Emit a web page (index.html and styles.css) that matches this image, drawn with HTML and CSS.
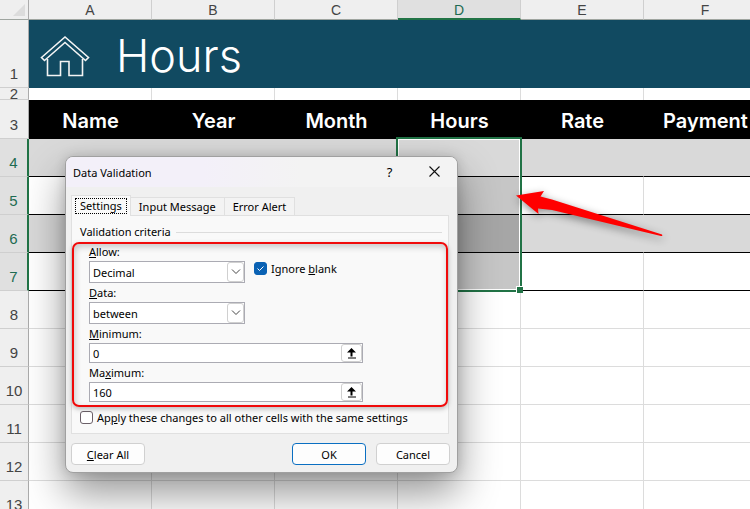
FILE: index.html
```html
<!DOCTYPE html>
<html lang="en">
<head>
    <meta charset="UTF-8">
    <meta name="viewport" content="width=device-width, initial-scale=1.0">
    <title>Hours</title>
    <link rel="stylesheet" href="styles.css">
</head>
<body>
    <div class="workbook">
        <table class="sheet">
            <colgroup>
                <col class="col-head">
                <col class="col"><col class="col"><col class="col"><col class="col"><col class="col"><col class="col">
            </colgroup>
            <thead>
                <tr class="letters">
                    <th class="corner"><svg width="12" height="12" viewBox="0 0 12 12"><path d="M12 0v12H0z" fill="#dcdcdc"/></svg></th>
                    <th>A</th><th>B</th><th>C</th><th class="selected">D</th><th>E</th><th>F</th>
                </tr>
            </thead>
            <tbody>
                <tr class="row-banner">
                    <th>1</th>
                    <td colspan="6">
                        <div class="banner">
                            <svg class="home" width="50" height="42" viewBox="0 0 50 42" fill="none" stroke="#f4f4f4" stroke-width="1.6">
                                <path d="M1.500 22.500 25 2 48.500 22.500 45.500 25.500 25 7.500 4.500 25.500z"/>
                                <path d="M7.500 24V40.500H20.500V26.500H29V40.500H42.500V24"/>
                            </svg>
                            <h1>Hours</h1>
                        </div>
                    </td>
                </tr>
                <tr class="row-thin"><th><span>2</span></th><td></td><td></td><td></td><td></td><td></td><td></td></tr>
                <tr class="row-titles"><th>3</th><td>Name</td><td>Year</td><td>Month</td><td>Hours</td><td>Rate</td><td>Payment</td></tr>
                <tr class="data shaded">
                    <th>4</th><td></td><td></td><td></td>
                    <td class="picked"><div class="selection"><span class="handle"></span></div></td>
                    <td></td><td></td>
                </tr>
                <tr class="data"><th>5</th><td></td><td></td><td></td><td class="picked"></td><td></td><td></td></tr>
                <tr class="data shaded"><th>6</th><td></td><td></td><td></td><td class="picked dark"></td><td></td><td></td></tr>
                <tr class="data"><th>7</th><td></td><td></td><td></td><td class="picked"></td><td></td><td></td></tr>
                <tr><th>8</th><td></td><td></td><td></td><td></td><td></td><td></td></tr>
                <tr><th>9</th><td></td><td></td><td></td><td></td><td></td><td></td></tr>
                <tr><th>10</th><td></td><td></td><td></td><td></td><td></td><td></td></tr>
                <tr><th>11</th><td></td><td></td><td></td><td></td><td></td><td></td></tr>
                <tr><th>12</th><td></td><td></td><td></td><td></td><td></td><td></td></tr>
                <tr><th>13</th><td></td><td></td><td></td><td></td><td></td><td></td></tr>
            </tbody>
        </table>

        <form class="dialog" role="dialog" aria-labelledby="dialogTitle">
            <div class="title-bar">
                <h2 id="dialogTitle">Data Validation</h2>
                <button type="button" class="title-btn" aria-label="Help">?</button>
                <button type="button" class="title-btn" aria-label="Close">
                    <svg width="11" height="11" viewBox="0 0 11 11" fill="none" stroke="#111" stroke-width="1.1"><path d="M.5.5l10 10M10.500.5l-10 10"/></svg>
                </button>
            </div>

            <div class="dialog-body">
                <div class="tabs" role="tablist">
                    <button type="button" class="tab active" role="tab"><span>Settings</span></button>
                    <button type="button" class="tab" role="tab">Input Message</button>
                    <button type="button" class="tab" role="tab">Error Alert</button>
                </div>

                <div class="panel">
                    <div class="group-title">Validation criteria</div>

                    <div class="criteria">
                        <label for="allow"><u>A</u>llow:</label>
                        <div class="field-row">
                            <div class="dropdown">
                                <select id="allow"><option>Decimal</option></select>
                                <span class="drop-btn"><svg width="10" height="6" viewBox="0 0 10 6" fill="none" stroke="#444"><path d="M1 .5l4 4 4-4"/></svg></span>
                            </div>
                            <label class="check">
                                <input type="checkbox" checked>
                                <svg class="tick" width="13" height="13" viewBox="0 0 13 13" fill="none" stroke="#fff"><path d="M3.500 6.500l2 2 4-4"/></svg>
                                <span>Ignore <u>b</u>lank</span>
                            </label>
                        </div>

                        <label for="data"><u>D</u>ata:</label>
                        <div class="dropdown">
                            <select id="data"><option>between</option></select>
                            <span class="drop-btn"><svg width="10" height="6" viewBox="0 0 10 6" fill="none" stroke="#444"><path d="M1 .5l4 4 4-4"/></svg></span>
                        </div>

                        <label for="minimum"><u>M</u>inimum:</label>
                        <div class="ref-box">
                            <input type="text" id="minimum" value="0">
                            <button type="button" aria-label="Select minimum cell"><svg width="9" height="11" viewBox="0 0 9 11"><path d="M4.500 0L9 4.500H5.500V8.500H3.500V4.500H0zM1 9.500h8v1H1z"/></svg></button>
                        </div>

                        <label for="maximum">Ma<u>x</u>imum:</label>
                        <div class="ref-box">
                            <input type="text" id="maximum" value="160">
                            <button type="button" aria-label="Select maximum cell"><svg width="9" height="11" viewBox="0 0 9 11"><path d="M4.500 0L9 4.500H5.500V8.500H3.500V4.500H0zM1 9.500h8v1H1z"/></svg></button>
                        </div>
                    </div>

                    <label class="check apply">
                        <input type="checkbox">
                        <span>Ap<u>p</u>ly these changes to all other cells with the same settings</span>
                    </label>
                    <div class="highlight"></div>
                </div>

                <div class="actions">
                    <button type="button" class="btn clear"><u>C</u>lear All</button>
                    <button type="button" class="btn primary">OK</button>
                    <button type="button" class="btn">Cancel</button>
                </div>
            </div>
        </form>

        <svg class="arrow" width="147" height="46" viewBox="0 0 147 46"><path d="M0 4.500L28 0 24.500 5.500Q30 7 36 8.500L146 43.500Q147 45 145 45L36 19 22 17.500 22.500 23z" fill="#f00"/></svg>
    </div>
</body>
</html>
```
FILE: styles.css
```css
* {
    margin: 0;
    padding: 0;
    box-sizing: border-box;
}

body {
    font-family: "Noto Sans", "Open Sans", sans-serif;
    font-size: 11px;
    color: #000;
    background: #fff;
}

button, input, select {
    font: inherit;
    color: inherit;
}

.workbook {
    position: relative;
    height: 100vh;
    overflow: hidden;
}

/* Sheet */
.sheet {
    table-layout: fixed;
    width: 767px;
    border-collapse: separate;
    border-spacing: 0;
    font-family: Inter, sans-serif;
}

.col-head {
    width: 29px;
}

.col {
    width: 123px;
}

.sheet td {
    height: 38px;
    border-right: 1px solid #dcdcdc;
    border-bottom: 1px solid #dcdcdc;
}

.sheet th {
    font-family: "Liberation Sans", sans-serif;
    font-size: 15px;
    font-weight: normal;
    line-height: 16px;
    color: #444;
    background: #efefef;
    vertical-align: bottom;
    padding-bottom: 5px;
    border-right: 1px solid #ababab;
    border-bottom: 1px solid #cfcfcf;
}

.sheet .letters th {
    height: 20px;
    font-size: 14px;
    padding-bottom: 1px;
    border-right-color: #cfcfcf;
    border-bottom-color: #9fa5a0;
}

.sheet .letters .corner {
    padding: 0 3px 3px 0;
    line-height: 0;
    text-align: right;
    border-right-color: #ababab;
}

.sheet .letters .selected {
    padding-bottom: 0;
    color: #1e6b52;
    background: #e0e0e0;
    border-bottom: 2px solid #217346;
}

.sheet .row-banner td {
    height: 68px;
    background: #114a61;
    border: none;
}

.banner {
    display: flex;
    align-items: center;
    gap: 26px;
    padding: 3px 0 0 11px;
    color: #fff;
}

.banner h1 {
    font-size: 45px;
    font-weight: 300;
    line-height: 60px;
}

.sheet .row-thin td,
.sheet .row-thin th {
    height: 12px;
    border-bottom: none;
    padding: 0;
}

.sheet .row-thin th {
    border-bottom: 1px solid #cfcfcf;
}

.row-thin span {
    display: flex;
    height: 10px;
    overflow: hidden;
    align-items: flex-end;
    justify-content: center;
    line-height: 10px;
}

.sheet .row-titles td {
    height: 39px;
    padding-top: 2px;
    font-size: 20px;
    font-weight: 600;
    text-align: center;
    color: #fff;
    background: #000;
    border: none;
}

.sheet .data th {
    color: #1e6b52;
    background: #e0e0e0;
    border-right: 2px solid #217346;
}

.sheet .data td {
    border-bottom-color: #000;
}

.sheet .shaded td {
    background: #d9d9d9;
    border-right-color: #d9d9d9;
}

.sheet .data .picked {
    position: relative;
    background: #c6c6c6;
}

.sheet .shaded .picked {
    background: #d9d9d9;
}

.sheet .shaded .dark {
    background: #a6a6a6;
}

.selection {
    position: absolute;
    z-index: 1;
    top: -2px;
    left: -2px;
    width: 126px;
    height: 155px;
    border: 2px solid #217346;
    box-shadow: inset 0 0 0 1px #fff;
}

.handle {
    position: absolute;
    right: -3px;
    bottom: -3px;
    width: 7px;
    height: 7px;
    background: #217346;
    border: 1px solid #fff;
    border-width: 1px 0 0 1px;
}

.arrow {
    position: absolute;
    z-index: 3;
    top: 191px;
    left: 516px;
    overflow: visible;
    filter: drop-shadow(1px 3px 4px rgba(0, 0, 0, 0.45));
}

/* Dialog */
.dialog {
    position: absolute;
    z-index: 2;
    top: 156px;
    left: 65px;
    width: 393px;
    background: #f0f0f0;
    border: 1px solid #a0a0a0;
    border-radius: 8px;
    box-shadow: 0 20px 40px rgba(0, 0, 0, 0.42), 0 0 12px rgba(0, 0, 0, 0.15);
}

.title-bar {
    display: flex;
    align-items: center;
    height: 30px;
    padding-left: 7px;
    background: linear-gradient(90deg, #f3f0f9 35%, #f3f3f3 60%);
    border-radius: 7px 7px 0 0;
}

.title-bar h2 {
    flex: 1;
    font-size: 11px;
    font-weight: normal;
}

.title-btn {
    width: 45px;
    height: 28px;
    font-size: 13px;
    background: none;
    border: none;
}

.dialog-body {
    padding: 8px 8px 7px 5px;
}

.tabs {
    display: flex;
    align-items: flex-end;
    height: 20px;
}

.tab {
    height: 18px;
    padding: 0 8px;
    line-height: 17px;
    background: #f3f3f3;
    border: 1px solid #e0e0e0;
    border-left: none;
    border-bottom: none;
}

.tab.active {
    position: relative;
    z-index: 1;
    height: 21px;
    margin-bottom: -1px;
    padding: 0 3px;
    background: #f9f9f9;
    border-left: 1px solid #e0e0e0;
}

.tab.active span {
    display: block;
    padding: 0 4px;
    line-height: 14px;
    border: 1px dotted #000;
}

.panel {
    position: relative;
    padding: 8px 6px 8px 8px;
    background: #f9f9f9;
    border: 1px solid #e0e0e0;
}

.group-title {
    display: flex;
    align-items: center;
    gap: 5px;
    line-height: 16px;
}

.group-title::after {
    content: "";
    flex: 1;
    border-top: 1px solid #dcdcdc;
}

.criteria {
    display: grid;
    justify-items: start;
    padding: 4px 0 8px 9px;
}

.criteria > label {
    line-height: 15px;
    margin-top: 2px;
    margin-bottom: 2px;
}

.criteria > label:first-child {
    margin-top: 0;
}

.field-row {
    display: flex;
    gap: 9px;
}

.dropdown {
    display: grid;
    width: 156px;
    height: 22px;
}

.dropdown select,
.drop-btn {
    grid-area: 1 / 1;
}

.dropdown select {
    appearance: none;
    padding: 0 20px 0 3px;
    background: #fff;
    border: 1px solid #ababb3;
    border-radius: 0;
}

.drop-btn {
    display: flex;
    align-items: center;
    justify-content: center;
    justify-self: end;
    width: 17px;
    margin: 1px;
    background: #fff;
    border: 1px solid #d0d0d0;
    border-radius: 3px;
    pointer-events: none;
}

.check {
    display: grid;
    grid-template-columns: 13px auto;
    justify-content: start;
    align-items: center;
    gap: 4px;
    height: 15px;
}

.check input {
    grid-area: 1 / 1;
    appearance: none;
    width: 13px;
    height: 13px;
    background: #fff;
    border: 1px solid #6b6068;
    border-radius: 3px;
}

.check input:checked {
    background: #0a62b4;
    border-color: #0a62b4;
}

.tick {
    grid-area: 1 / 1;
    z-index: 1;
    pointer-events: none;
}

.ref-box {
    display: flex;
    width: 274px;
    height: 20px;
    background: #fff;
    border: 1px solid #ababb3;
}

.ref-box input {
    flex: 1;
    min-width: 0;
    padding: 0 3px;
    background: none;
    border: none;
}

.ref-box button {
    display: flex;
    align-items: center;
    justify-content: center;
    width: 21px;
    background: #fff;
    border: 1px solid #d0d0d0;
    border-radius: 3px;
}

.highlight {
    position: absolute;
    top: 26px;
    left: 0;
    right: 0;
    height: 165px;
    border: 2px solid #f00a0a;
    border-radius: 7px;
    box-shadow: 0 2px 5px rgba(0, 0, 0, 0.25), inset 1px 3px 6px rgba(0, 0, 0, 0.2);
    pointer-events: none;
}

.actions {
    display: flex;
    gap: 10px;
    margin: 9px -1px 0 0;
}

.btn {
    width: 74px;
    height: 22px;
    background: #fdfdfd;
    border: 1px solid #d0d0d0;
    border-radius: 4px;
}

.btn.clear {
    margin-right: auto;
}

.btn.primary {
    border-color: #0a6fc2;
}
```
